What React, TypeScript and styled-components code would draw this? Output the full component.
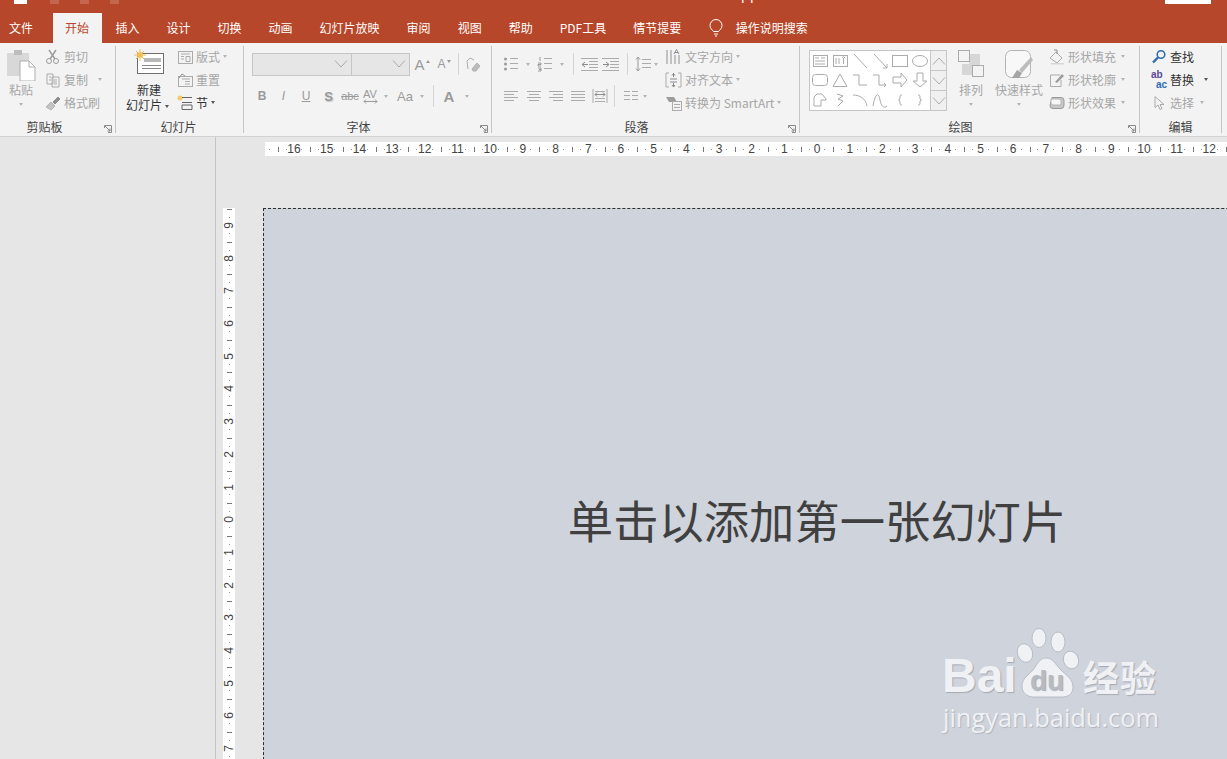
import React from "react";
import styled, { createGlobalStyle } from "styled-components";

const GlobalStyle = createGlobalStyle`
  html, body {
    margin: 0;
    padding: 0;
    background: #e6e6e6;
  }
  * {
    box-sizing: border-box;
  }
`;

const CJK = `"Noto Sans CJK SC", "Noto Sans", sans-serif`;
const DIM = "#a6a6a6";
const INK = "#444444";

const Page = styled.div`
  position: relative;
  width: 1227px;
  height: 759px;
  overflow: hidden;
  display: flex;
  flex-direction: column;
  font-family: ${CJK};
  font-size: 12px;
  color: ${INK};
`;

/* ---------- title bar + tabs ---------- */

const TitleBar = styled.div`
  height: 13px;
  flex: none;
  background: #b7472a;
  display: flex;
  align-items: flex-start;
  overflow: hidden;
`;

const TitleGlyph = styled.span<{ $ml: number; $w: number; $faded?: boolean }>`
  width: ${(p) => p.$w}px;
  height: 4px;
  margin-left: ${(p) => p.$ml}px;
  background: ${(p) => (p.$faded ? "#c2674d" : "#ffffff")};
  flex: none;
`;

const TitleText = styled.span`
  margin: -13px 0 0 622px;
  color: #fff;
  font-size: 13px;
  line-height: 16px;
  letter-spacing: 1px;
`;

const TabBar = styled.nav`
  height: 30px;
  flex: none;
  background: #b7472a;
  display: flex;
  align-items: stretch;
`;

const Tab = styled.div<{ $active?: boolean; $first?: boolean }>`
  padding: 0 ${(p) => (p.$first ? 20 : p.$active ? 13 : 13.5)}px 0 ${(p) => (p.$first ? 9 : p.$active ? 12 : 13.5)}px;
  line-height: 29px;
  font-size: 12px;
  white-space: nowrap;
  color: ${(p) => (p.$active ? "#b7472a" : "#ffffff")};
  background: ${(p) => (p.$active ? "#f3f3f3" : "transparent")};
`;

const SearchTab = styled.div`
  display: flex;
  align-items: center;
  gap: 13px;
  margin-left: 14px;
  color: #fff;
  height: 29px;
`;

/* ---------- ribbon ---------- */

const Ribbon = styled.div`
  height: 94px;
  flex: none;
  display: flex;
  background: #f3f3f3;
  border-bottom: 1px solid #d2d2d2;
`;

const Group = styled.section<{ $w: number }>`
  position: relative;
  width: ${(p) => p.$w}px;
  flex: none;
  display: flex;
  flex-direction: column;
`;

const GroupBody = styled.div`
  height: 77px;
  padding-top: 3px;
  display: flex;
  flex: none;
`;

const GroupLabel = styled.div<{ $shift?: number }>`
  text-align: center;
  line-height: 14px;
  font-size: 12px;
  color: ${INK};
  transform: translateX(${(p) => p.$shift ?? 0}px);
`;

const GroupRule = styled.div`
  width: 1px;
  flex: none;
  margin: 3px 0 3px;
  background: #c6c6c6;
`;

const Launcher = styled.svg`
  position: absolute;
  right: 3px;
  bottom: 3px;
  width: 8px;
  height: 8px;
  fill: none;
  stroke: #8a8a8a;
  stroke-width: 1;
`;

const BigButton = styled.div<{ $w: number; $ml?: number; $on?: boolean }>`
  width: ${(p) => p.$w}px;
  margin-left: ${(p) => p.$ml ?? 0}px;
  flex: none;
  display: flex;
  flex-direction: column;
  align-items: center;
  line-height: 15px;
  white-space: nowrap;
  color: ${(p) => (p.$on ? "#333333" : DIM)};
`;

const BigIcon = styled.div`
  height: 36px;
  padding-top: 3px;
  flex: none;
`;

const LabelLine = styled.span`
  margin-left: -3px;
`;

const Column = styled.div<{ $ml?: number }>`
  margin: -1px 0 0 ${(p) => p.$ml ?? 0}px;
  display: flex;
  flex-direction: column;
  flex: none;
`;

const SmallButton = styled.div<{ $on?: boolean }>`
  height: 23px;
  display: flex;
  align-items: center;
  white-space: nowrap;
  color: ${(p) => (p.$on ? "#333333" : DIM)};

  & > svg {
    flex: none;
    margin-right: 3px;
  }
`;

const Caret = styled.span<{ $ml?: number; $on?: boolean; $below?: boolean }>`
  display: inline-block;
  margin-left: ${(p) => p.$ml ?? 6}px;
  margin-top: ${(p) => (p.$below ? 6 : 0)}px;
  vertical-align: ${(p) => (p.$on ? 2 : 0)}px;
  width: 0;
  height: 0;
  flex: none;
  border-left: 2.5px solid transparent;
  border-right: 2.5px solid transparent;
  border-top: 3px solid ${(p) => (p.$on ? "#555555" : "#b4b4b4")};
`;

const Stack = styled.div<{ $pl: number; $w?: number }>`
  padding: 7px 0 0 ${(p) => p.$pl}px;
  width: ${(p) => (p.$w ? `${p.$w}px` : "auto")};
  flex: none;
  display: flex;
  flex-direction: column;
  gap: 10px;
`;

const ToolRow = styled.div`
  height: 22px;
  display: flex;
  align-items: center;
`;

const Cell = styled.div<{
  $w: number;
  $ml?: number;
  $bold?: boolean;
  $italic?: boolean;
  $under?: boolean;
  $size?: number;
  $strike?: boolean;
  $shadow?: boolean;
}>`
  width: ${(p) => p.$w}px;
  margin-left: ${(p) => p.$ml ?? 0}px;
  flex: none;
  display: flex;
  align-items: center;
  justify-content: center;
  color: #9a9a9a;
  font-family: "Liberation Sans", sans-serif;
  font-size: ${(p) => p.$size ?? 12}px;
  font-weight: ${(p) => (p.$bold ? 700 : 400)};
  font-style: ${(p) => (p.$italic ? "italic" : "normal")};
  text-decoration: ${(p) => (p.$under ? "underline" : p.$strike ? "line-through" : "none")};
  text-shadow: ${(p) => (p.$shadow ? "1px 1px 1px #c4c4c4" : "none")};
`;

const StepMark = styled.span<{ $down?: boolean }>`
  width: 0;
  height: 0;
  margin: -6px 0 0 1px;
  border-left: 2px solid transparent;
  border-right: 2px solid transparent;
  ${(p) => (p.$down ? "border-top: 3px solid #9a9a9a;" : "border-bottom: 3px solid #9a9a9a;")}
`;

const KernStack = styled.span`
  display: flex;
  flex-direction: column;
  align-items: center;
  line-height: 10px;
  font-size: 11px;
`;

const RowRule = styled.div<{ $ml: number }>`
  width: 1px;
  height: 22px;
  margin-left: ${(p) => p.$ml}px;
  background: #d4d4d4;
  flex: none;
`;

const Combo = styled.div<{ $w: number }>`
  width: ${(p) => p.$w}px;
  height: 23px;
  flex: none;
  margin-right: -1px;
  display: flex;
  align-items: center;
  justify-content: flex-end;
  padding-right: 3px;
  background: #e6e6e6;
  border: 1px solid #c6c6c6;
`;

/* shapes gallery */
const Gallery = styled.div`
  margin: 4px 0 0 9px;
  width: 138px;
  height: 61px;
  flex: none;
  display: flex;
  background: #ffffff;
  border: 1px solid #c6c6c6;
`;

const ShapeGrid = styled.div`
  flex: 1;
  display: grid;
  grid-template-columns: repeat(6, 1fr);
  grid-template-rows: repeat(3, 1fr);
  justify-items: center;
  align-items: center;
`;

const GalleryScroll = styled.div`
  width: 16px;
  flex: none;
  display: flex;
  flex-direction: column;
  background: #f0f0f0;
  border-left: 1px solid #c6c6c6;
`;

const ScrollButton = styled.div`
  flex: 1;
  display: flex;
  align-items: center;
  justify-content: center;
  border-bottom: 1px solid #c6c6c6;

  &:last-child {
    border-bottom: 0;
  }
`;

const Ico = styled.svg`
  fill: none;
  stroke: #ababab;
  stroke-width: 1;
  display: block;
`;

/* ---------- workspace ---------- */

const Workspace = styled.main`
  flex: 1;
  min-height: 0;
  display: flex;
  background: #e6e6e6;
`;

const ThumbPane = styled.aside`
  width: 216px;
  flex: none;
  border-right: 1px solid #c4c4c4;
`;

const Editor = styled.div`
  flex: 1;
  min-width: 0;
  padding: 5px 0 0 7px;
  display: flex;
  flex-direction: column;
  overflow: hidden;
`;

const HRuler = styled.div`
  margin-left: 42px;
  height: 14px;
  flex: none;
  display: flex;
  background: #ffffff;
  overflow: hidden;
`;

const STEP = 32.7;

const HCell = styled.div<{ $offset?: number }>`
  width: ${STEP}px;
  flex: none;
  margin-left: ${(p) => p.$offset ?? 0}px;
  text-align: center;
  font: 12px/14px "Liberation Sans", sans-serif;
  color: #444;
  background:
    linear-gradient(#777, #777) 0 50% / 1px 5px no-repeat,
    linear-gradient(#999, #999) 25% 50% / 1px 1px no-repeat,
    linear-gradient(#999, #999) 75% 50% / 1px 1px no-repeat;
`;

const CanvasRow = styled.div`
  margin-top: 52px;
  flex: 1;
  min-height: 0;
  display: flex;
`;

const VRuler = styled.div`
  width: 12px;
  margin-right: 28px;
  padding-top: 1px;
  flex: none;
  background: #ffffff;
  display: flex;
  flex-direction: column;
`;

const VCell = styled.div`
  height: ${STEP}px;
  flex: none;
  display: flex;
  align-items: center;
  justify-content: center;
  font: 12px/12px "Liberation Sans", sans-serif;
  color: #444;
  background:
    linear-gradient(#777, #777) 50% 0 / 5px 1px no-repeat,
    linear-gradient(#999, #999) 50% 25% / 1px 1px no-repeat,
    linear-gradient(#999, #999) 50% 75% / 1px 1px no-repeat;
`;

const VLabel = styled.span`
  writing-mode: vertical-rl;
  transform: rotate(180deg);
`;

const Slide = styled.div`
  width: 1106px;
  height: 622px;
  flex: none;
  display: flex;
  align-items: center;
  justify-content: center;
  background: #cfd3dc;
  border: 1px dashed #2e2e2e;
  padding-left: 2px;
  font-size: 45.3px;
  line-height: 62px;
  color: #404040;
  white-space: nowrap;
`;

/* ---------- watermark, lies over the slide ---------- */

const Watermark = styled.div`
  position: absolute;
  left: 943px;
  top: 628px;
  width: 222px;
  color: #eff1f5;
`;

const MarkRow = styled.div`
  height: 70px;
  display: flex;
  align-items: flex-end;
  text-shadow: 1px 1px 1px #a5a9b2;
`;

const MarkBai = styled.span`
  font: 700 48px/44px "Liberation Sans", sans-serif;
  width: 71px;
  flex: none;
  margin-left: -1px;
`;

const MarkJing = styled.span`
  font: 700 36px/44px ${CJK};
  letter-spacing: 1px;
  flex: none;
`;

const MarkUrl = styled.div`
  margin-top: 5px;
  font: 400 25.4px/28px "Open Sans", sans-serif;
  white-space: nowrap;
  text-shadow: 1px 1px 1px #b0b4bd;
`;

/* ---------- drawings ---------- */

const lines = (rows: [number, number, number][]) =>
  rows.map(([a, b, y]) => <path key={`${a}${y}`} d={`M${a} ${y}.5H${b}`} />);

const I16 = ({ children, w = 16 }: { children: React.ReactNode; w?: number }) => (
  <Ico width={w} height={16} viewBox={`0 0 ${w} 16`}>
    {children}
  </Ico>
);

const LauncherMark = () => (
  <Launcher viewBox="0 0 8 8">
    <path d="M.5 3V.5H7.500V7.500H4M1 1l5 5M6 3.500V6H3.500" />
  </Launcher>
);

const PasteIcon = () => (
  <Ico width={30} height={32} viewBox="0 0 30 32">
    <rect x="1" y="4" width="22" height="23" fill="#d8d8d8" stroke="none" />
    <rect x="8" y="1" width="8" height="5" fill="#bdbdbd" stroke="none" />
    <path d="M14 12h9l6 6v14H14z" fill="#fff" stroke="#b0b0b0" />
    <path d="M23 12v6h6" stroke="#b0b0b0" />
  </Ico>
);

const NewSlideIcon = () => (
  <Ico width={30} height={27} viewBox="0 0 30 27">
    <rect x="3.5" y="4.5" width="26" height="20" fill="#fff" stroke="#6e6e6e" />
    <rect x="10" y="9" width="17" height="4" fill="#b8b8b8" stroke="none" />
    <path d="M8 16.5h19M8 19.5h19" stroke="#8a8a8a" />
    <circle cx="6" cy="6" r="3" fill="#f3c96b" stroke="none" />
    <path d="M6 0v12M0 6h12M2 2l8 8M10 2l-8 8" stroke="#f0bd55" />
  </Ico>
);

const ScissorsIcon = () => (
  <I16>
    <circle cx="4" cy="12" r="2.5" stroke="#9a9a9a" />
    <circle cx="11" cy="12" r="2.5" stroke="#9a9a9a" />
    <path d="M5 10L11 1M10 10L4 1" stroke="#9a9a9a" strokeWidth="1.4" />
  </I16>
);

const CopyIcon = () => (
  <I16>
    <path d="M2 2h6v10H2zM7 5h7v10H7z" fill="#f3f3f3" />
    <path d="M4 5h2M4 8h2M9 8h3M9 10h3M9 12h3" />
  </I16>
);

const BrushIcon = () => (
  <I16>
    <path d="M1 12l5-5 4 4-4 4z" fill="#c4c4c4" stroke="#b4b4b4" />
    <path d="M8 7l5-5 2 2-5 5z" fill="#8e8e8e" stroke="#8e8e8e" />
  </I16>
);

const LayoutIcon = () => (
  <I16>
    <rect x="1.5" y="2.5" width="14" height="12" />
    <path d="M4 5h9M4 7.5h3M4 10h3M9 7.5h4v5H9z" />
  </I16>
);

const ResetIcon = () => (
  <I16>
    <rect x="1.5" y="4.5" width="14" height="10" />
    <path d="M5 7h8M8 9.5h5M8 12h5" />
    <path d="M2 6l3-4 3 2" stroke="#8e8e8e" />
  </I16>
);

const SectionIcon = () => (
  <I16>
    <circle cx="3" cy="3" r="2.5" fill="#f3c96b" stroke="none" />
    <path d="M5 2.5h10M5 7.5h10M5 14.5h10M5 10h10V14.5M5 10v4.5" stroke="#666" />
  </I16>
);

const EraserIcon = () => (
  <I16>
    <path d="M3 13l-1-8 3-3 4 2" />
    <path d="M7 13l5-6 3 3-4 5H8z" fill="#bcbcbc" stroke="#b0b0b0" />
  </I16>
);

const BulletsIcon = () => (
  <I16>
    {lines([[7, 15, 2], [7, 15, 7], [7, 15, 12]])}
    <circle cx="2.5" cy="3" r="1.5" fill="#9a9a9a" stroke="none" />
    <circle cx="2.5" cy="8" r="1.5" fill="#9a9a9a" stroke="none" />
    <circle cx="2.5" cy="13" r="1.5" fill="#9a9a9a" stroke="none" />
  </I16>
);

const NumbersIcon = () => (
  <I16>
    {lines([[7, 15, 2], [7, 15, 7], [7, 15, 12]])}
    <path d="M3 1v4M1 7h3v1.5H1V10h3M1 12h3v3H1M2 13.5h2" stroke="#9a9a9a" />
  </I16>
);

const OutdentIcon = () => (
  <I16 w={17}>
    {lines([[0, 17, 2], [8, 17, 5], [8, 17, 8], [8, 17, 11], [0, 17, 14]])}
    <path d="M7 8.5H1M4 6L1 8.5 4 11" stroke="#8a8a8a" />
  </I16>
);

const IndentIcon = () => (
  <I16 w={17}>
    {lines([[0, 17, 2], [8, 17, 5], [8, 17, 8], [8, 17, 11], [0, 17, 14]])}
    <path d="M1 8.5h6M4 6l3 2.5L4 11" stroke="#8a8a8a" />
  </I16>
);

const SpacingIcon = () => (
  <I16>
    {lines([[7, 16, 3], [7, 16, 7], [7, 16, 11]])}
    <path d="M3 1v14M1 3.5L3 1l2 2.5M1 12.5L3 15l2-2.5" stroke="#9a9a9a" />
  </I16>
);

const AlignIcon = ({ rows }: { rows: [number, number, number][] }) => <I16>{lines(rows)}</I16>;

const DistributeIcon = () => (
  <I16>
    <path d="M1 1v14M15 1v14" />
    {lines([[3, 13, 3], [3, 13, 10], [3, 13, 13]])}
    <path d="M3 6.5h10M5 4.5l-2 2 2 2M11 4.5l2 2-2 2" stroke="#8a8a8a" />
  </I16>
);

const ColumnsIcon = () => <I16>{lines([[1, 7, 3], [9, 15, 3], [1, 7, 7], [9, 15, 7], [1, 7, 11], [9, 15, 11]])}</I16>;

const TextDirIcon = () => (
  <I16 w={17}>
    <path d="M2 1v14M6 1v14M10 6v9M14 6v9" stroke="#8e8e8e" />
    <path d="M9 5l2.500-4.500L14 5M10 3.500h3" stroke="#8e8e8e" />
  </I16>
);

const AlignTextIcon = () => (
  <I16 w={17}>
    <path d="M4 1H1v14h3M13 1h3v14h-3" />
    <path d="M5 7h7M5 10h7M8.500 1v4M7 3.500l1.500-2 1.500 2M8.500 11v4M7 13l1.500 2 1.500-2" stroke="#8a8a8a" />
  </I16>
);

const SmartArtIcon = () => (
  <I16 w={17}>
    <path d="M1 2h8l3 5H4z" fill="#9c9c9c" stroke="none" />
    <rect x="7.500" y="6.500" width="9" height="9" fill="#f3f3f3" />
    <path d="M9 9.500h6M9 12.500h6" />
  </I16>
);

const ArrangeIcon = () => (
  <Ico width={28} height={32} viewBox="0 0 28 32">
    <rect x="12" y="5" width="11" height="11" fill="#d6d6d6" stroke="none" />
    <rect x="5" y="15" width="11" height="11" fill="#d6d6d6" stroke="none" />
    <rect x="1.500" y="1.500" width="11" height="11" fill="#f3f3f3" />
    <rect x="15.500" y="16.500" width="11" height="11" fill="#f3f3f3" />
  </Ico>
);

const QuickStyleIcon = () => (
  <Ico width={30} height={30} viewBox="0 0 30 30">
    <rect x="1.500" y="1.500" width="25" height="27" rx="6" fill="#f8f8f8" stroke="#b4b4b4" />
    <path d="M8 29l5-8 5 3-3 5z" fill="#a4a4a4" stroke="none" />
    <path d="M15 21l12-13 2 3-11 13z" fill="#bcbcbc" stroke="none" />
  </Ico>
);

const FillIcon = () => (
  <I16>
    <path d="M1 9l6-6 6 6-5 5z" fill="#f3f3f3" />
    <path d="M5 1h3v4" stroke="#8e8e8e" />
    <path d="M2 14h13v1.500H2z" fill="#d6d6d6" stroke="none" />
  </I16>
);

const OutlineIcon = () => (
  <I16>
    <path d="M11 3H1.500v11.500H12V8" />
    <path d="M6 10l7-8 2 2-7 7z" fill="#9e9e9e" stroke="none" />
  </I16>
);

const EffectIcon = () => (
  <I16>
    <path d="M3 2.500h9a3 3 0 013 3v5a3 3 0 01-3 3H4a3 3 0 01-3-3z" fill="#c8c8c8" stroke="#9a9a9a" />
    <path d="M2 4h8a2 2 0 012 2v4H4a2 2 0 01-2-2z" fill="#f7f7f7" stroke="#b4b4b4" />
  </I16>
);

const FindIcon = () => (
  <I16>
    <circle cx="10" cy="5.500" r="3.800" stroke="#2c6cae" strokeWidth="1.500" />
    <path d="M7 8.500l-5 5" stroke="#2c6cae" strokeWidth="2.400" />
  </I16>
);

const ReplaceGlyph = styled.span`
  width: 16px;
  margin-right: 3px;
  flex: none;
  display: flex;
  flex-direction: column;
  font: 700 10px/10px "Liberation Sans", sans-serif;
`;

const ReplaceLine = styled.span<{ $blue?: boolean }>`
  color: ${(p) => (p.$blue ? "#2c6cae" : "#5c4a96")};
  align-self: ${(p) => (p.$blue ? "flex-end" : "flex-start")};
`;

const SelectIcon = () => (
  <I16>
    <path d="M4 1.500v11l3-2.500 2 4.500 2-1-2-4h4z" />
  </I16>
);

const Chevron = ({ up, w = 14, light }: { up?: boolean; w?: number; light?: boolean }) => (
  <Ico width={w} height={w / 2 + 1} viewBox="0 0 14 8" stroke={light ? "#b8b8b8" : "#a0a0a0"}>
    <path d={up ? "M1 7.500L7 1l6 6.500" : "M1 .5L7 7l6-6.500"} />
  </Ico>
);

const KernArrow = () => (
  <Ico width={15} height={5} viewBox="0 0 15 5">
    <path d="M1 2.500h13M3 .5l-2 2 2 2M12 .5l2 2-2 2" stroke="#9a9a9a" />
  </Ico>
);

const BulbStroke = styled(Ico)`
  stroke: #ffffff;
`;

const BulbIcon = () => (
  <BulbStroke width={14} height={18} viewBox="0 0 14 18">
    <path d="M4.500 12.500C3 10.500 1 9.500 1 6.500a6 6 0 0112 0c0 3-2 4-3.500 6z" />
    <path d="M5 15h4M6 17h2" />
  </BulbStroke>
);

const shapes: React.ReactNode[] = [
  <><rect x="1.500" y="2.500" width="14" height="11" /><path d="M3 5h4M9 5h4M3 8h10M3 11h10" /></>,
  <><rect x="1.500" y="2.500" width="14" height="11" /><path d="M4 5v6M7 5v6M10 5l1.500-1.500L13 5M11.500 5v6" /></>,
  <path d="M2 1l13 14" />,
  <path d="M2 1l13 14M11 15h4v-4" />,
  <rect x=".5" y="2.500" width="15" height="11" />,
  <ellipse cx="8" cy="8" rx="7.500" ry="5.500" />,
  <rect x=".5" y="2.500" width="15" height="11" rx="3" />,
  <path d="M8 2l7 12.500H1z" />,
  <path d="M1 3h6v10h8" />,
  <path d="M1 3h6v10h7M12 11l2 2-2 2" />,
  <path d="M1 5h8V1l6 7-6 7v-4H1z" />,
  <path d="M5 1h6v8h4l-7 6-7-6h4z" />,
  <path d="M2 14V5l3-3h5l4 5v1H9v6z" />,
  <path d="M5 2l6 2-5 3 5 2-5 5" />,
  <path d="M1 3c7 0 13 4 14 11" />,
  <path d="M1 14c3-16 6-12 7-6s4 9 7 6" />,
  <path d="M10 3H9Q8 3 8 5V7L6.500 8 8 9V11Q8 13 9 13H10" />,
  <path d="M6 3H7Q8 3 8 5V7L9.500 8 8 9V11Q8 13 7 13H6" />,
];

const tabs = ["插入", "设计", "切换", "动画", "幻灯片放映", "审阅", "视图", "帮助", "PDF工具", "情节提要"];
const hNums = [16, 15, 14, 13, 12, 11, 10, 9, 8, 7, 6, 5, 4, 3, 2, 1, 0, 1, 2, 3, 4, 5, 6, 7, 8, 9, 10, 11, 12, 13, 14, 15, 16];
const vNums = [9, 8, 7, 6, 5, 4, 3, 2, 1, 0, 1, 2, 3, 4, 5, 6, 7, 8, 9];

export default function App() {
  return (
    <Page>
      <GlobalStyle />

      <TitleBar>
        <TitleGlyph $ml={14} $w={13} />
        <TitleGlyph $ml={23} $w={9} $faded />
        <TitleGlyph $ml={21} $w={9} $faded />
        <TitleGlyph $ml={21} $w={9} $faded />
        <TitleText>pp</TitleText>
        <TitleGlyph $ml={406} $w={46} />
      </TitleBar>

      <TabBar>
        <Tab $first>文件</Tab>
        <Tab $active>开始</Tab>
        {tabs.map((t) => (
          <Tab key={t}>{t}</Tab>
        ))}
        <SearchTab>
          <BulbIcon />
          操作说明搜索
        </SearchTab>
      </TabBar>

      <Ribbon>
        <Group $w={115}>
          <GroupBody>
            <BigButton $w={30} $ml={6}>
              <BigIcon>
                <PasteIcon />
              </BigIcon>
              粘贴
              <Caret $ml={0} $below />
            </BigButton>
            <Column $ml={9}>
              <SmallButton>
                <ScissorsIcon />
                剪切
              </SmallButton>
              <SmallButton>
                <CopyIcon />
                复制
                <Caret $ml={10} />
              </SmallButton>
              <SmallButton>
                <BrushIcon />
                格式刷
              </SmallButton>
            </Column>
          </GroupBody>
          <GroupLabel $shift={-13}>剪贴板</GroupLabel>
          <LauncherMark />
        </Group>
        <GroupRule />

        <Group $w={127}>
          <GroupBody>
            <BigButton $w={46} $ml={10} $on>
              <BigIcon>
                <NewSlideIcon />
              </BigIcon>
              新建
              <LabelLine>
                幻灯片
                <Caret $ml={3} $on />
              </LabelLine>
            </BigButton>
            <Column $ml={5}>
              <SmallButton>
                <LayoutIcon />
                版式
                <Caret $ml={3} />
              </SmallButton>
              <SmallButton>
                <ResetIcon />
                重置
              </SmallButton>
              <SmallButton $on>
                <SectionIcon />
                节
                <Caret $ml={3} $on />
              </SmallButton>
            </Column>
          </GroupBody>
          <GroupLabel $shift={-1}>幻灯片</GroupLabel>
        </Group>
        <GroupRule />

        <Group $w={247}>
          <GroupBody>
            <Stack $pl={8}>
              <ToolRow>
                <Combo $w={100}>
                  <Chevron />
                </Combo>
                <Combo $w={59}>
                  <Chevron />
                </Combo>
                <Cell $w={22} $ml={2} $size={15}>
                  A
                  <StepMark />
                </Cell>
                <Cell $w={22} $size={12}>
                  A
                  <StepMark $down />
                </Cell>
                <RowRule $ml={3} />
                <Cell $w={27}>
                  <EraserIcon />
                </Cell>
              </ToolRow>
              <ToolRow>
                <Cell $w={20} $bold>B</Cell>
                <Cell $w={23} $italic>I</Cell>
                <Cell $w={22} $under>U</Cell>
                <Cell $w={23} $bold $shadow $size={13}>S</Cell>
                <Cell $w={20} $size={11} $strike>abc</Cell>
                <Cell $w={20}>
                  <KernStack>
                    AV
                    <KernArrow />
                  </KernStack>
                </Cell>
                <Cell $w={11}>
                  <Caret $ml={0} />
                </Cell>
                <Cell $w={28} $size={13}>Aa</Cell>
                <Cell $w={6}>
                  <Caret $ml={0} />
                </Cell>
                <RowRule $ml={8} />
                <Cell $w={30} $bold $size={15}>A</Cell>
                <Cell $w={6}>
                  <Caret $ml={0} />
                </Cell>
              </ToolRow>
            </Stack>
          </GroupBody>
          <GroupLabel $shift={-9}>字体</GroupLabel>
          <LauncherMark />
        </Group>
        <GroupRule />

        <Group $w={307}>
          <GroupBody>
            <Stack $pl={11} $w={173}>
              <ToolRow>
                <Cell $w={16}><BulletsIcon /></Cell>
                <Cell $w={8} $ml={5}><Caret $ml={0} /></Cell>
                <Cell $w={16} $ml={5}><NumbersIcon /></Cell>
                <Cell $w={8} $ml={5}><Caret $ml={0} /></Cell>
                <RowRule $ml={7} />
                <Cell $w={17} $ml={7}><OutdentIcon /></Cell>
                <Cell $w={17} $ml={4}><IndentIcon /></Cell>
                <RowRule $ml={8} />
                <Cell $w={16} $ml={7}><SpacingIcon /></Cell>
                <Cell $w={8} $ml={1}><Caret $ml={0} /></Cell>
              </ToolRow>
              <ToolRow>
                <Cell $w={16}><AlignIcon rows={[[1, 15, 3], [1, 11, 6], [1, 15, 9], [1, 11, 12]]} /></Cell>
                <Cell $w={16} $ml={7}><AlignIcon rows={[[1, 15, 3], [3, 13, 6], [1, 15, 9], [3, 13, 12]]} /></Cell>
                <Cell $w={16} $ml={6}><AlignIcon rows={[[1, 15, 3], [5, 15, 6], [1, 15, 9], [5, 15, 12]]} /></Cell>
                <Cell $w={16} $ml={6}><AlignIcon rows={[[1, 15, 3], [1, 15, 6], [1, 15, 9], [1, 15, 12]]} /></Cell>
                <Cell $w={16} $ml={6}><DistributeIcon /></Cell>
                <RowRule $ml={6} />
                <Cell $w={16} $ml={8}><ColumnsIcon /></Cell>
                <Cell $w={8} $ml={2}><Caret $ml={0} /></Cell>
              </ToolRow>
            </Stack>
            <Column>
              <SmallButton>
                <TextDirIcon />
                文字方向
                <Caret $ml={3} />
              </SmallButton>
              <SmallButton>
                <AlignTextIcon />
                对齐文本
                <Caret $ml={3} />
              </SmallButton>
              <SmallButton>
                <SmartArtIcon />
                转换为 SmartArt
                <Caret $ml={3} />
              </SmallButton>
            </Column>
          </GroupBody>
          <GroupLabel $shift={-9}>段落</GroupLabel>
          <LauncherMark />
        </Group>
        <GroupRule />

        <Group $w={339}>
          <GroupBody>
            <Gallery>
              <ShapeGrid>
                {shapes.map((s, i) => (
                  <Ico key={i} width={16} height={16} viewBox="0 0 16 16">
                    {s}
                  </Ico>
                ))}
              </ShapeGrid>
              <GalleryScroll>
                <ScrollButton>
                  <Chevron up light />
                </ScrollButton>
                <ScrollButton>
                  <Chevron light />
                </ScrollButton>
                <ScrollButton>
                  <Chevron light />
                </ScrollButton>
              </GalleryScroll>
            </Gallery>
            <BigButton $w={38} $ml={5}>
              <BigIcon>
                <ArrangeIcon />
              </BigIcon>
              排列
              <Caret $ml={0} $below />
            </BigButton>
            <BigButton $w={48} $ml={5}>
              <BigIcon>
                <QuickStyleIcon />
              </BigIcon>
              快速样式
              <Caret $ml={0} $below />
            </BigButton>
            <Column $ml={6}>
              <SmallButton>
                <FillIcon />
                形状填充
                <Caret $ml={5} />
              </SmallButton>
              <SmallButton>
                <OutlineIcon />
                形状轮廓
                <Caret $ml={5} />
              </SmallButton>
              <SmallButton>
                <EffectIcon />
                形状效果
                <Caret $ml={5} />
              </SmallButton>
            </Column>
          </GroupBody>
          <GroupLabel $shift={-9}>绘图</GroupLabel>
          <LauncherMark />
        </Group>
        <GroupRule />

        <Group $w={81}>
          <GroupBody>
            <Column $ml={11}>
              <SmallButton $on>
                <FindIcon />
                查找
              </SmallButton>
              <SmallButton $on>
                <ReplaceGlyph>
                  <ReplaceLine>ab</ReplaceLine>
                  <ReplaceLine $blue>ac</ReplaceLine>
                </ReplaceGlyph>
                替换
                <Caret $ml={10} $on />
              </SmallButton>
              <SmallButton>
                <SelectIcon />
                选择
                <Caret $ml={6} />
              </SmallButton>
            </Column>
          </GroupBody>
          <GroupLabel>编辑</GroupLabel>
        </Group>
        <GroupRule />
      </Ribbon>

      <Workspace>
        <ThumbPane />
        <Editor>
          <HRuler>
            <HCell $offset={-20} />
            {hNums.map((n, i) => (
              <HCell key={i}>{n}</HCell>
            ))}
          </HRuler>
          <CanvasRow>
            <VRuler>
              {vNums.map((n, i) => (
                <VCell key={i}>
                  <VLabel>{n}</VLabel>
                </VCell>
              ))}
            </VRuler>
            <Slide>单击以添加第一张幻灯片</Slide>
          </CanvasRow>
        </Editor>
      </Workspace>

      <Watermark>
        <MarkRow>
          <MarkBai>Bai</MarkBai>
          <svg width="70" height="70" viewBox="0 0 70 70">
            <g fill="#eff1f5" stroke="#b0b4bd" strokeWidth="0.8">
              <ellipse cx="26" cy="10" rx="7" ry="9.500" />
              <ellipse cx="45" cy="14" rx="7" ry="10" />
              <ellipse cx="12" cy="25" rx="7.500" ry="9.500" transform="rotate(-20 12 25)" />
              <ellipse cx="58" cy="32" rx="7.500" ry="9" transform="rotate(-20 58 32)" />
              <path d="M33 30c7 0 9 6 15 12 5 5 12 9 12 17 0 7-5 10-11 10H21c-7 0-12-4-12-11 0-8 7-11 11-16 4-5 6-12 13-12z" />
            </g>
            <text x="34" y="62" textAnchor="middle" fontFamily="Liberation Sans" fontWeight="700" fontSize="28" fill="#b7bbc3">
              du
            </text>
          </svg>
          <MarkJing>经验</MarkJing>
        </MarkRow>
        <MarkUrl>jingyan.baidu.com</MarkUrl>
      </Watermark>
    </Page>
  );
}
